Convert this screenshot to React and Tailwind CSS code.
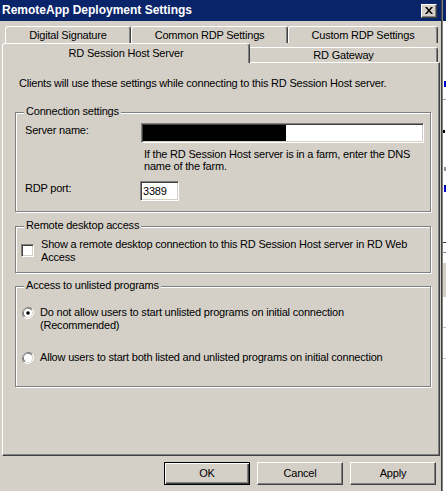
import React from "react";

const tabBack =
  "flex h-[17px] items-center justify-center rounded-t-[3px] border-l border-t border-white border-r border-r-[#404040] shadow-[inset_-1px_0_0_#808080]";

const groupBox =
  "relative ml-[12px] w-[416px] border border-[#808080] shadow-[1px_1px_0_#fff,inset_1px_1px_0_#fff]";

const legend = "absolute -top-[8px] left-[8px] bg-[#d4d0c8] px-[2px] leading-[13px]";

const sunken =
  "border border-t-[#808080] border-l-[#808080] border-b-white border-r-white bg-white shadow-[inset_1px_1px_0_#404040,inset_-1px_-1px_0_#d4d0c8]";

function Radio({ checked }) {
  return (
    <svg width="12" height="12" viewBox="0 0 12 12" className="shrink-0">
      <path d="M10.2 1.8A6 6 0 0 0 1.8 10.2" fill="none" stroke="#808080" strokeWidth="1" />
      <path d="M9.4 2.6A4.9 4.9 0 0 0 2.6 9.4" fill="none" stroke="#404040" strokeWidth="1" />
      <path d="M1.8 10.2A6 6 0 0 0 10.2 1.8" fill="none" stroke="#fff" strokeWidth="1" />
      <circle cx="6" cy="6" r="4.2" fill="#fff" />
      {checked && <circle cx="6" cy="6" r="1.8" fill="#000" />}
    </svg>
  );
}

function Button({ label, isDefault }) {
  return (
    <div
      className={
        "flex h-[23px] w-[86px] items-center justify-center " +
        (isDefault
          ? "border border-black shadow-[inset_1px_1px_0_#fff,inset_-1px_-1px_0_#404040,inset_-2px_-2px_0_#808080]"
          : "border border-t-white border-l-white border-b-[#404040] border-r-[#404040] shadow-[inset_-1px_-1px_0_#808080]")
      }
    >
      {label}
    </div>
  );
}

export default function App() {
  return (
    <div className="flex h-[491px] w-[446px] overflow-hidden bg-white font-['Liberation_Sans',Arial,sans-serif] text-[11px] leading-[13px] tracking-[-0.2px] text-black">
      <div className="flex w-[442px] shrink-0 flex-col border-r border-[#404040] bg-[#d4d0c8]">
        {/* title bar */}
        <div className="flex h-[21px] shrink-0 items-center justify-between bg-[#0a246a] pl-[2px] pr-[4px]">
          <span className="text-[12px] font-bold tracking-normal text-white">RemoteApp Deployment Settings</span>
          <div className="flex h-[14px] w-[16px] items-center justify-center border border-t-white border-l-white border-b-[#404040] border-r-[#404040] bg-[#d4d0c8] shadow-[inset_-1px_-1px_0_#808080]">
            <svg width="8" height="7" viewBox="0 0 8 7">
              <path d="M0 0h2l2 2.5L6 0h2L5 3.5 8 7H6L4 4.5 2 7H0l3-3.5z" fill="#000" />
            </svg>
          </div>
        </div>

        {/* tabs */}
        <div className="mt-[5px] flex pl-[5px]">
          <div className={tabBack + " w-[126px]"}>Digital Signature</div>
          <div className={tabBack + " w-[157px]"}>Common RDP Settings</div>
          <div className={tabBack + " w-[150px]"}>Custom RDP Settings</div>
        </div>
        <div className="flex h-[19px] items-end pl-[2px]">
          <div className="relative z-10 -mb-[1px] flex h-[20px] w-[248px] items-center justify-center rounded-t-[3px] border-l border-t border-white bg-[#d4d0c8] border-r border-r-[#404040] shadow-[inset_-1px_0_0_#808080]">
            RD Session Host Server
          </div>
          <div className="flex h-[15px] w-[188px] items-center justify-center rounded-tr-[3px] border-t border-white border-r border-r-[#404040] shadow-[inset_-1px_0_0_#808080]">
            RD Gateway
          </div>
        </div>

        {/* panel */}
        <div className="ml-[2px] flex h-[394px] w-[438px] flex-col border border-t-white border-l-white border-b-[#404040] border-r-[#404040] shadow-[inset_-1px_-1px_0_#808080]">
          <p className="mt-[14px] pl-[16px]">
            Clients will use these settings while connecting to this RD Session Host server.
          </p>

          <div className={groupBox + " mt-[22px] pb-[10px] pl-[9px] pt-[10px]"}>
            <span className={legend}>Connection settings</span>
            <div className="flex items-start">
              <span className="mt-[1px] w-[116px]">Server name:</span>
              <div className={sunken + " flex h-[20px] w-[283px] items-stretch p-[1px]"}>
                <div className="w-[143px] bg-black" />
              </div>
            </div>
            <p className="ml-[119px] mt-[5px] leading-[12px]">
              If the RD Session Host server is in a farm, enter the DNS
              <br />
              name of the farm.
            </p>
            <div className="mt-[9px] flex items-start">
              <span className="mt-[1px] w-[115px]">RDP port:</span>
              <div className={sunken + " flex h-[20px] w-[39px] items-center pl-[2px]"}>3389</div>
            </div>
          </div>

          <div className={groupBox + " mt-[14px] pb-[8px] pl-[5px] pt-[11px]"}>
            <span className={legend}>Remote desktop access</span>
            <div className="flex items-start">
              <div className={sunken + " mt-[6px] h-[13px] w-[13px] shrink-0"} />
              <p className="ml-[7px]">
                Show a remote desktop connection to this RD Session Host server in RD Web
                <br />
                Access
              </p>
            </div>
          </div>

          <div className={groupBox + " mt-[13px] pb-[22px] pl-[6px] pt-[19px]"}>
            <span className={legend}>Access to unlisted programs</span>
            <div className="flex items-start">
              <div className="mt-[1px]">
                <Radio checked />
              </div>
              <p className="ml-[6px]">
                Do not allow users to start unlisted programs on initial connection
                <br />
                (Recommended)
              </p>
            </div>
            <div className="mt-[19px] flex items-start">
              <div className="mt-[1px]">
                <Radio />
              </div>
              <p className="ml-[6px]">Allow users to start both listed and unlisted programs on initial connection</p>
            </div>
          </div>
        </div>

        {/* buttons */}
        <div className="mt-[6px] flex justify-end gap-[7px] pr-[5px]">
          <Button label="OK" isDefault />
          <Button label="Cancel" />
          <Button label="Apply" />
        </div>
      </div>

      {/* background app strip */}
      <div className="flex flex-1 flex-col border-l border-[#808080] bg-white">
        <div className="h-[21px] bg-[#0a246a]" />
        <div className="mt-[60px] ml-[1px] h-[6px] w-[3px] bg-[#0000cc]" />
        <div className="mt-[12px] h-[1px] bg-[#a0a0a0]" />
        <div className="mt-[30px] h-[3px] w-[2px] bg-black" />
        <div className="mt-[34px] ml-[1px] h-[4px] w-[2px] bg-[#909090]" />
        <div className="mt-[14px] ml-[1px] h-[7px] w-[2px] bg-[#0000cc]" />
        <div className="mt-[50px] h-[1px] bg-[#404040]" />
        <div className="mt-[9px] h-[1px] bg-[#808080]" />
        <div className="mt-[10px] h-[34px] bg-[#d4d0c8]" />
        <div className="mt-[30px] h-[1px] bg-[#c0c0c0]" />
        <div className="mt-[30px] h-[1px] bg-[#c0c0c0]" />
      </div>
    </div>
  );
}
